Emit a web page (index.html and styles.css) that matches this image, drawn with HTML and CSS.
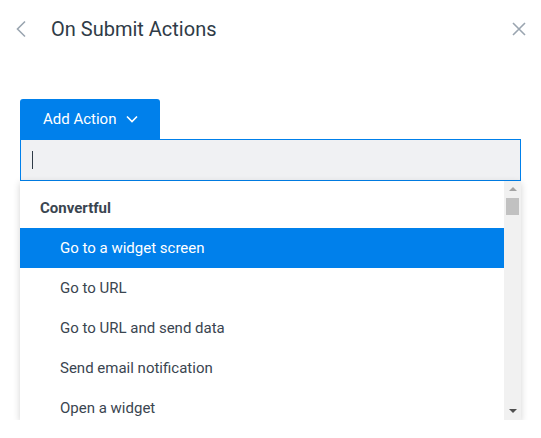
FILE: index.html
```html
<!DOCTYPE html>
<html lang="en">
<head>
    <meta charset="UTF-8">
    <meta name="viewport" content="width=device-width, initial-scale=1.0">
    <title>On Submit Actions</title>
    <link rel="stylesheet" href="styles.css">
</head>
<body>
    <main class="panel">
        <header class="panel-head">
            <button class="icon-btn back" aria-label="Back">
                <svg width="12" height="18" viewBox="0 0 12 18"><path d="M10 1.5 L2.5 9 L10 16.5" fill="none" stroke="currentColor" stroke-width="1.6"/></svg>
            </button>
            <h1 class="title">On Submit Actions</h1>
            <button class="icon-btn close" aria-label="Close">
                <svg width="14" height="14" viewBox="0 0 14 14"><path d="M1 1 L13 13 M13 1 L1 13" fill="none" stroke="currentColor" stroke-width="1.6"/></svg>
            </button>
        </header>

        <div class="picker">
            <button class="add-btn">
                Add Action
                <svg width="12" height="8" viewBox="0 0 12 8"><path d="M1 1.5 L6 6.5 L11 1.5" fill="none" stroke="currentColor" stroke-width="1.6"/></svg>
            </button>
            <div class="search">
                <span class="caret"></span>
            </div>
            <div class="dropdown">
                <ul class="options">
                    <li class="group">Convertful</li>
                    <li class="option active">Go to a widget screen</li>
                    <li class="option">Go to URL</li>
                    <li class="option">Go to URL and send data</li>
                    <li class="option">Send email notification</li>
                    <li class="option">Open a widget</li>
                </ul>
                <div class="scrollbar">
                    <span class="arrow up"></span>
                    <div class="track"><span class="thumb"></span></div>
                    <span class="arrow down"></span>
                </div>
            </div>
        </div>
    </main>
</body>
</html>
```

FILE: styles.css
```css
:root {
    --blue: #0080eb;
    --text: #3a4550;
    --muted: #9aa5b0;
}
* {
    box-sizing: border-box;
}
html, body {
    margin: 0;
    padding: 0;
    background: #fff;
    font-family: Roboto, "Noto Sans", sans-serif;
}

.panel {
    padding: 0 20px;
}

.panel-head {
    display: flex;
    align-items: center;
    height: 57px;
    margin: 0 -20px;
    padding: 0 13px 0 12px;
}
.icon-btn {
    display: flex;
    align-items: center;
    justify-content: center;
    padding: 0;
    border: none;
    background: none;
    color: var(--muted);
}
.back {
    width: 18px;
    height: 24px;
}
.close {
    width: 18px;
    height: 18px;
    margin-left: auto;
}
.title {
    margin: 0 0 0 21px;
    font-size: 20px;
    font-weight: 400;
    color: #2f3b47;
}

.picker {
    margin-top: 42px;
}
.add-btn {
    display: flex;
    align-items: center;
    gap: 10px;
    height: 40px;
    padding: 0 22px 0 23px;
    border: none;
    border-radius: 3px 3px 0 0;
    background: var(--blue);
    color: #fff;
    font-family: inherit;
    font-size: 15px;
}
.search {
    display: flex;
    align-items: center;
    height: 42px;
    padding: 0 11px;
    border: 1px solid var(--blue);
    background: #f0f1f3;
}
.caret {
    width: 1px;
    height: 18px;
    background: #2f3b47;
}

.dropdown {
    display: flex;
    height: 239px;
    background: #fff;
    box-shadow: 0 2px 7px rgba(0, 0, 0, .18);
}
.options {
    flex: 1;
    margin: 0;
    padding: 7px 0 0;
    list-style: none;
    overflow: hidden;
}
.options li {
    display: flex;
    align-items: center;
    height: 40px;
    font-size: 15px;
    color: var(--text);
}
.options .group {
    padding-left: 20px;
    font-weight: 700;
}
.options .option {
    padding-left: 40px;
}
.options .option.active {
    background: var(--blue);
    color: #fff;
}

.scrollbar {
    display: flex;
    flex-direction: column;
    align-items: center;
    width: 17px;
    background: #f1f1f1;
}
.arrow {
    width: 0;
    height: 0;
    border-left: 4px solid transparent;
    border-right: 4px solid transparent;
}
.arrow.up {
    margin-top: 6px;
    border-bottom: 4px solid #a3a3a3;
}
.arrow.down {
    margin-bottom: 7px;
    border-top: 4px solid #505050;
}
.track {
    flex: 1;
    align-self: stretch;
    padding: 7px 2px 0;
}
.thumb {
    display: block;
    height: 17px;
    background: #c1c1c1;
}
```
